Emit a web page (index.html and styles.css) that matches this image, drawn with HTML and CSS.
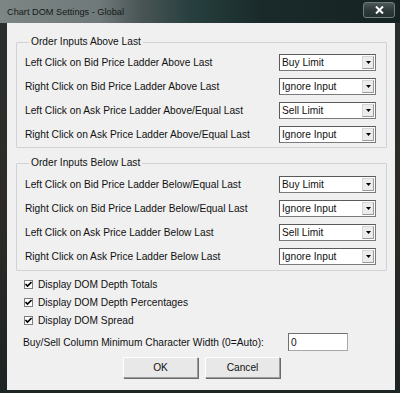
FILE: index.html
```html
<!DOCTYPE html>
<html lang="en">
<head>
<meta charset="UTF-8">
<title>Chart DOM Settings - Global</title>
<link rel="stylesheet" href="styles.css">
</head>
<body>

<div class="window">
    <div class="titlebar">
        <span class="title">Chart DOM Settings - Global</span>
        <button class="close" type="button">
            <svg width="9" height="8" viewBox="0 0 9 8"><path d="M1 0.5 L8 7.5 M8 0.5 L1 7.5" stroke="#fff" stroke-width="2"/></svg>
        </button>
    </div>
    <div class="frame">
        <div class="client">
            <fieldset class="group">
                <legend>Order Inputs Above Last</legend>
                <div class="row">
                    <span class="label">Left Click on Bid Price Ladder Above Last</span>
                    <div class="combo"><span class="value">Buy Limit</span><span class="arrow"><svg width="5" height="3" viewBox="0 0 5 3"><path d="M0 0 H5 L2.5 3 Z" fill="#000"/></svg></span></div>
                </div>
                <div class="row">
                    <span class="label">Right Click on Bid Price Ladder Above Last</span>
                    <div class="combo"><span class="value">Ignore Input</span><span class="arrow"><svg width="5" height="3" viewBox="0 0 5 3"><path d="M0 0 H5 L2.5 3 Z" fill="#000"/></svg></span></div>
                </div>
                <div class="row">
                    <span class="label">Left Click on Ask Price Ladder Above/Equal Last</span>
                    <div class="combo"><span class="value">Sell Limit</span><span class="arrow"><svg width="5" height="3" viewBox="0 0 5 3"><path d="M0 0 H5 L2.5 3 Z" fill="#000"/></svg></span></div>
                </div>
                <div class="row">
                    <span class="label">Right Click on Ask Price Ladder Above/Equal Last</span>
                    <div class="combo"><span class="value">Ignore Input</span><span class="arrow"><svg width="5" height="3" viewBox="0 0 5 3"><path d="M0 0 H5 L2.5 3 Z" fill="#000"/></svg></span></div>
                </div>
            </fieldset>

            <fieldset class="group group-below">
                <legend>Order Inputs Below Last</legend>
                <div class="row">
                    <span class="label">Left Click on Bid Price Ladder Below/Equal Last</span>
                    <div class="combo"><span class="value">Buy Limit</span><span class="arrow"><svg width="5" height="3" viewBox="0 0 5 3"><path d="M0 0 H5 L2.5 3 Z" fill="#000"/></svg></span></div>
                </div>
                <div class="row">
                    <span class="label">Right Click on Bid Price Ladder Below/Equal Last</span>
                    <div class="combo"><span class="value">Ignore Input</span><span class="arrow"><svg width="5" height="3" viewBox="0 0 5 3"><path d="M0 0 H5 L2.5 3 Z" fill="#000"/></svg></span></div>
                </div>
                <div class="row">
                    <span class="label">Left Click on Ask Price Ladder Below Last</span>
                    <div class="combo"><span class="value">Sell Limit</span><span class="arrow"><svg width="5" height="3" viewBox="0 0 5 3"><path d="M0 0 H5 L2.5 3 Z" fill="#000"/></svg></span></div>
                </div>
                <div class="row">
                    <span class="label">Right Click on Ask Price Ladder Below Last</span>
                    <div class="combo"><span class="value">Ignore Input</span><span class="arrow"><svg width="5" height="3" viewBox="0 0 5 3"><path d="M0 0 H5 L2.5 3 Z" fill="#000"/></svg></span></div>
                </div>
            </fieldset>

            <div class="checks">
                <label class="check-row"><span class="box"><svg width="7" height="7" viewBox="0 0 7 7"><path d="M0.5 3 L2.5 5 L6.5 1" stroke="#000" stroke-width="1.6" fill="none"/></svg></span>Display DOM Depth Totals</label>
                <label class="check-row"><span class="box"><svg width="7" height="7" viewBox="0 0 7 7"><path d="M0.5 3 L2.5 5 L6.5 1" stroke="#000" stroke-width="1.6" fill="none"/></svg></span>Display DOM Depth Percentages</label>
                <label class="check-row"><span class="box"><svg width="7" height="7" viewBox="0 0 7 7"><path d="M0.5 3 L2.5 5 L6.5 1" stroke="#000" stroke-width="1.6" fill="none"/></svg></span>Display DOM Spread</label>
            </div>

            <div class="width-row">
                <span class="label">Buy/Sell Column Minimum Character Width (0=Auto):</span>
                <input class="num" type="text" value="0">
            </div>

            <div class="buttons">
                <button type="button" class="btn">OK</button>
                <button type="button" class="btn">Cancel</button>
            </div>
        </div>
    </div>
</div>

</body>
</html>
```

FILE: styles.css
```css
body {
    margin: 0;
    padding: 0;
    background-color: #1b2424;
    font-family: "Liberation Sans", Arial, sans-serif;
    font-size: 10.2px;
    color: #111;
}

.window {
    width: 400px;
    height: 393px;
    display: flex;
    flex-direction: column;
    background: linear-gradient(180deg, #27302f 0%, #2e2b26 50%, #1d2424 100%);
}

.titlebar {
    height: 23px;
    display: flex;
    align-items: center;
    justify-content: space-between;
    padding: 0 5px 0 7px;
    background: linear-gradient(90deg, #7d8585 0px, #707979 100px, #4a5555 140px, #27403f 190px, #1a2a2a 260px, #162222 100%);
}

.title {
    font-size: 9.2px;
    color: #141919;
    padding-top: 1px;
}

.close {
    width: 32px;
    height: 16px;
    margin-top: -3px;
    padding: 0;
    border: 1px solid #6f7d7d;
    border-radius: 3px;
    background: linear-gradient(180deg, #4c5858 0%, #2f3b3b 50%, #253131 100%);
    display: flex;
    align-items: center;
    justify-content: center;
}

.frame {
    flex: 1;
    display: flex;
    padding: 0 5px 3px 7px;
}

.client {
    flex: 1;
    background-color: #f0f0f0;
    padding: 13px 8px 0 9px;
    display: flex;
    flex-direction: column;
}

.group {
    margin: 0;
    padding: 2px 10px 1px 8px;
    border: 1px solid #cfd3d6;
    border-radius: 1px;
}

.group legend {
    margin-left: 4px;
    padding: 0 2px;
    font-size: 10.2px;
    line-height: 12px;
}

.group-below {
    margin-top: 9px;
    padding-top: 3px;
    padding-bottom: 2px;
}

.row {
    height: 24px;
    display: flex;
    align-items: center;
    justify-content: space-between;
}

.combo {
    width: 97px;
    height: 17px;
    box-sizing: border-box;
    border: 1px solid #7a7a7a;
    border-top-color: #5a5a5a;
    border-left-color: #5a5a5a;
    background-color: #fff;
    display: flex;
    align-items: center;
    justify-content: space-between;
}

.value {
    padding-left: 2px;
}

.arrow {
    width: 12px;
    height: 13px;
    margin-right: 1px;
    box-sizing: border-box;
    border: 1px solid #d6d6d6;
    border-right-color: #9a9a9a;
    border-bottom-color: #9a9a9a;
    background-color: #ececec;
    display: flex;
    align-items: center;
    justify-content: center;
}

.checks {
    margin-top: 4px;
    padding-left: 8px;
    display: flex;
    flex-direction: column;
}

.check-row {
    height: 18px;
    display: flex;
    align-items: center;
}

.box {
    width: 9px;
    height: 9px;
    box-sizing: border-box;
    border: 1px solid #7c7c7c;
    background-color: #fff;
    margin-right: 5px;
    display: flex;
    align-items: center;
    justify-content: center;
}

.width-row {
    margin-top: 4px;
    padding-left: 7px;
    height: 18px;
    display: flex;
    align-items: center;
}

.width-row .label {
    width: 265px;
}

.num {
    width: 60px;
    height: 18px;
    box-sizing: border-box;
    margin: 0;
    padding: 0 2px;
    border: 1px solid #a8a8a8;
    border-top-color: #6f6f6f;
    border-left-color: #6f6f6f;
    font-family: "Liberation Sans", Arial, sans-serif;
    font-size: 10.2px;
    color: #111;
    background-color: #fff;
}

.buttons {
    margin-top: 6px;
    display: flex;
    justify-content: center;
    gap: 7px;
}

.btn {
    width: 75px;
    height: 21px;
    padding: 0;
    border: 1px solid #9c9c9c;
    border-top-color: #fff;
    border-left-color: #fff;
    box-shadow: 1px 1px 0 #6a6a6a;
    background-color: #e8e8e8;
    font-family: "Liberation Sans", Arial, sans-serif;
    font-size: 10.2px;
    color: #111;
}
```
